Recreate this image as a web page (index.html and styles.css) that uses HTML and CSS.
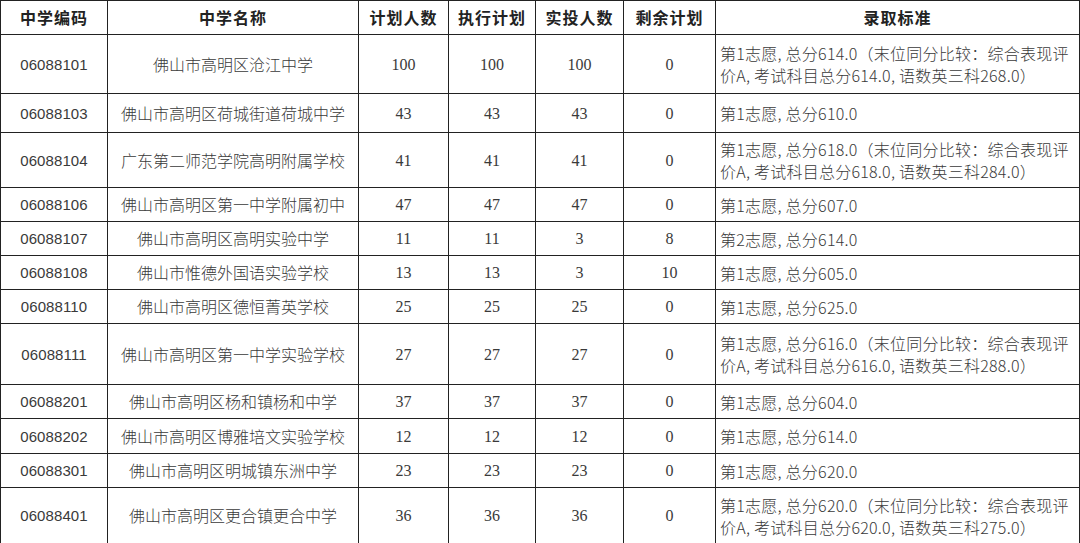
FILE: index.html
```html
<!DOCTYPE html>
<html lang="zh-CN">
<head>
<meta charset="utf-8">
<title>录取标准</title>
<link rel="stylesheet" href="styles.css">
</head>
<body>
<div class="sheet">
  <div class="c hd">中学编码</div><div class="c hd">中学名称</div><div class="c hd">计划人数</div><div class="c hd">执行计划</div><div class="c hd">实投人数</div><div class="c hd">剩余计划</div><div class="c hd">录取标准</div>

  <div class="c code">06088101</div><div class="c name">佛山市高明区沧江中学</div><div class="c num">100</div><div class="c num">100</div><div class="c num">100</div><div class="c num">0</div><div class="c crit"><span class="ln">第1志愿, 总分614.0（末位同分比较：综合表现评</span><span class="ln">价A, 考试科目总分614.0, 语数英三科268.0）</span></div>

  <div class="c code">06088103</div><div class="c name">佛山市高明区荷城街道荷城中学</div><div class="c num">43</div><div class="c num">43</div><div class="c num">43</div><div class="c num">0</div><div class="c crit"><span class="ln">第1志愿, 总分610.0</span></div>

  <div class="c code">06088104</div><div class="c name">广东第二师范学院高明附属学校</div><div class="c num">41</div><div class="c num">41</div><div class="c num">41</div><div class="c num">0</div><div class="c crit"><span class="ln">第1志愿, 总分618.0（末位同分比较：综合表现评</span><span class="ln">价A, 考试科目总分618.0, 语数英三科284.0）</span></div>

  <div class="c code">06088106</div><div class="c name">佛山市高明区第一中学附属初中</div><div class="c num">47</div><div class="c num">47</div><div class="c num">47</div><div class="c num">0</div><div class="c crit"><span class="ln">第1志愿, 总分607.0</span></div>

  <div class="c code">06088107</div><div class="c name">佛山市高明区高明实验中学</div><div class="c num">11</div><div class="c num">11</div><div class="c num">3</div><div class="c num">8</div><div class="c crit"><span class="ln">第2志愿, 总分614.0</span></div>

  <div class="c code">06088108</div><div class="c name">佛山市惟德外国语实验学校</div><div class="c num">13</div><div class="c num">13</div><div class="c num">3</div><div class="c num">10</div><div class="c crit"><span class="ln">第1志愿, 总分605.0</span></div>

  <div class="c code">06088110</div><div class="c name">佛山市高明区德恒菁英学校</div><div class="c num">25</div><div class="c num">25</div><div class="c num">25</div><div class="c num">0</div><div class="c crit"><span class="ln">第1志愿, 总分625.0</span></div>

  <div class="c code">06088111</div><div class="c name">佛山市高明区第一中学实验学校</div><div class="c num">27</div><div class="c num">27</div><div class="c num">27</div><div class="c num">0</div><div class="c crit"><span class="ln">第1志愿, 总分616.0（末位同分比较：综合表现评</span><span class="ln">价A, 考试科目总分616.0, 语数英三科288.0）</span></div>

  <div class="c code">06088201</div><div class="c name">佛山市高明区杨和镇杨和中学</div><div class="c num">37</div><div class="c num">37</div><div class="c num">37</div><div class="c num">0</div><div class="c crit"><span class="ln">第1志愿, 总分604.0</span></div>

  <div class="c code">06088202</div><div class="c name">佛山市高明区博雅培文实验学校</div><div class="c num">12</div><div class="c num">12</div><div class="c num">12</div><div class="c num">0</div><div class="c crit"><span class="ln">第1志愿, 总分614.0</span></div>

  <div class="c code">06088301</div><div class="c name">佛山市高明区明城镇东洲中学</div><div class="c num">23</div><div class="c num">23</div><div class="c num">23</div><div class="c num">0</div><div class="c crit"><span class="ln">第1志愿, 总分620.0</span></div>

  <div class="c code">06088401</div><div class="c name">佛山市高明区更合镇更合中学</div><div class="c num">36</div><div class="c num">36</div><div class="c num">36</div><div class="c num">0</div><div class="c crit"><span class="ln">第1志愿, 总分620.0（末位同分比较：综合表现评</span><span class="ln">价A, 考试科目总分620.0, 语数英三科275.0）</span></div>
</div>
</body>
</html>
```
FILE: styles.css
```css
html, body {
  margin: 0;
  padding: 0;
  background: #ffffff;
}

body {
  width: 1080px;
  height: 543px;
  overflow: hidden;
  font-family: "Noto Sans CJK SC", "Noto Sans", sans-serif;
  color: #3a3a3a;
}

.sheet {
  display: grid;
  grid-template-columns: 107px 251px 90px 87px 88px 92px 364px;
  grid-template-rows: 34px 59px 39px 55px 34px 34px 34px 34px 61px 34px 35px 34px 56px;
  border-top: 1px solid #222;
  border-left: 1px solid #222;
  width: 1080px;
  box-sizing: border-box;
}

.c {
  border-right: 1px solid #222;
  border-bottom: 1px solid #222;
  display: flex;
  align-items: center;
  justify-content: center;
  font-size: 16px;
  line-height: 21px;
  font-weight: 300;
  white-space: nowrap;
  overflow: hidden;
}

.hd {
  font-size: 16px;
  font-weight: 700;
  letter-spacing: 1px;
  color: #222;
}

.code {
  font-family: "Liberation Sans", "Noto Sans", sans-serif;
  font-size: 15px;
  font-weight: 400;
  letter-spacing: 0.1px;
}

.num {
  font-family: "Liberation Serif", "Noto Sans CJK SC", serif;
  font-size: 16px;
  font-weight: 400;
}

.crit {
  flex-direction: column;
  align-items: flex-start;
  justify-content: center;
  padding-left: 4px;
  letter-spacing: 0.25px;
}

.ln {
  display: block;
  height: 22px;
  line-height: 22px;
}
```
